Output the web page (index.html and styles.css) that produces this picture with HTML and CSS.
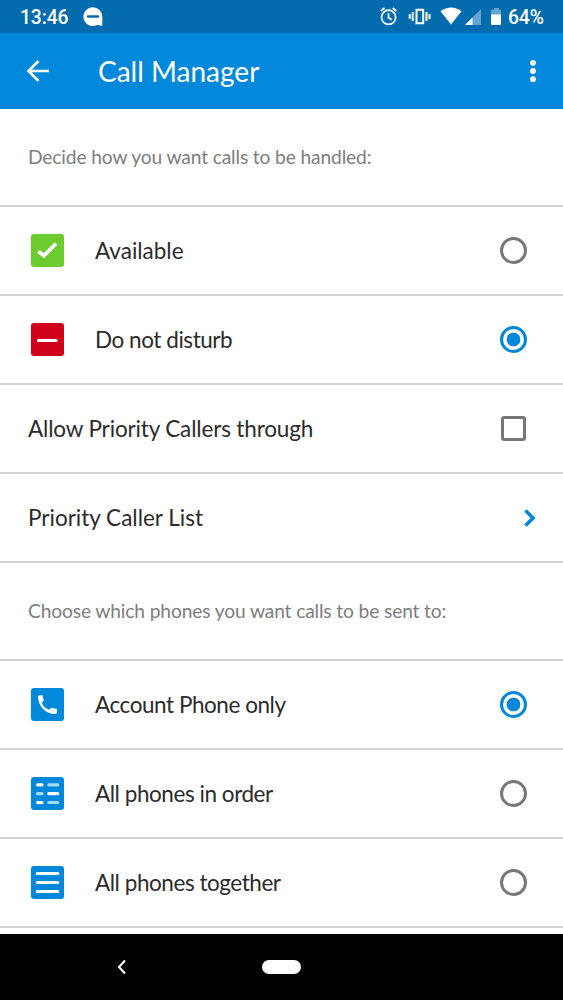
FILE: index.html
```
<!DOCTYPE html>
<html lang="en">
<head>
<meta charset="utf-8">
<title>Call Manager</title>
<link rel="stylesheet" href="styles.css">
</head>
<body>
<div class="screen">
  <div class="status">
    <span class="clock">13:46</span>
    <svg class="bubble" width="20" height="20" viewBox="0 0 20 20"><path d="M10 .3a9.4 9.4 0 1 0 4 17.8l5.3.7V9.500A9.400 9.400 0 0 0 10 .3z" fill="#fff"/><path d="M5 9.500h10" stroke="#026cae" stroke-width="2.400" stroke-linecap="round"/></svg>
    <svg class="indicators" width="126" height="20" viewBox="0 0 126 20">
      <g fill="none" stroke="#fff" stroke-width="1.700">
        <circle cx="9.600" cy="10.300" r="7.100"/><path d="M1.800 4l3.700-3M17.400 4l-3.700-3M9.500 6v4.800l3.500 2"/>
        <path d="M37.500 2.700h6.700v13.600h-6.700zM33.700 5v9M30.700 7v5M47.500 5v9M50.500 7v5" stroke-width="2"/>
      </g>
      <path d="M61.500 4.300Q72-3.200 82.500 4.300L72 17.500z" fill="#fff"/>
      <path d="M102 2v16H86z" fill="#63a5cf"/><path d="M93.500 10.500V18H86z" fill="#fff"/>
      <path d="M112 2.700h3V1h5v1.700h2V8h-10z" fill="#63a5cf"/><path d="M112 7.500h10V18h-10z" fill="#fff"/>
    </svg>
    <span class="percent">64%</span>
  </div>
  <header class="appbar">
    <svg class="back" width="24" height="24" viewBox="0 0 24 24"><path d="M23 12H3M12.500 2L2.500 12l10 10" fill="none" stroke="#fff" stroke-width="2.600"/></svg>
    <h1 class="title">Call Manager</h1>
    <svg class="more" width="8" height="24" viewBox="0 0 8 24" fill="#fff"><circle cx="4" cy="3.800" r="2.900"/><circle cx="4" cy="12" r="2.900"/><circle cx="4" cy="20.200" r="2.900"/></svg>
  </header>
  <main class="list">
    <p class="section">Decide how you want calls to be handled:</p>
    <div class="row">
      <svg class="icon" viewBox="0 0 33 33"><rect width="33" height="33" rx="3" fill="#6ccc2e"/><path d="M7.200 17.200l5.800 4.500L25 9.500" fill="none" stroke="#fff" stroke-width="3.800"/></svg>
      <span class="label">Available</span><span class="radio"></span>
    </div>
    <div class="row">
      <svg class="icon" viewBox="0 0 33 33"><rect width="33" height="33" rx="3" fill="#d0021b"/><path d="M7.500 17.500h17.500" stroke="#fff" stroke-width="3.200" stroke-linecap="round"/></svg>
      <span class="label tight">Do not disturb</span><span class="radio selected"></span>
    </div>
    <div class="row"><span class="label snug">Allow Priority Callers through</span><span class="checkbox"></span></div>
    <div class="row"><span class="label">Priority Caller List</span>
      <svg class="chevron" width="12" height="18" viewBox="0 0 12 18"><path d="M1.500 1.500L9 9l-7.500 7.500" fill="none" stroke="#0288da" stroke-width="3.600"/></svg>
    </div>
    <p class="section">Choose which phones you want calls to be sent to:</p>
    <div class="row">
      <svg class="icon" viewBox="0 0 33 33"><rect width="33" height="33" rx="3" fill="#0288da"/><path d="M7 7.800L11.400 7l1.400 5.500-2.100 2.400c1.600 3.300 3.800 5.300 7.300 6.900l2.500-2 5.500 1.300-.4 4.900C15.500 27 6.800 18.500 7 7.800z" fill="#fff"/></svg>
      <span class="label tight">Account Phone only</span><span class="radio selected"></span>
    </div>
    <div class="row">
      <svg class="icon" viewBox="0 0 33 33"><rect width="33" height="33" rx="3" fill="#0288da"/><g stroke-width="3.200" stroke-linecap="round"><path d="M6.500 7.800H11M17.800 16.700h9M6.500 25.500H11" stroke="#fff"/><path d="M17.800 7.800h9M6.500 16.700H11M17.800 25.500h9" stroke="#a5d9f7"/></g></svg>
      <span class="label tight">All phones in order</span><span class="radio"></span>
    </div>
    <div class="row">
      <svg class="icon" viewBox="0 0 33 33"><rect width="33" height="33" rx="3" fill="#0288da"/><path d="M6.300 7.500h20.500M6.300 16.500h20.500M6.300 25.500h20.500" stroke="#fff" stroke-width="3.200" stroke-linecap="round"/></svg>
      <span class="label tight">All phones together</span><span class="radio"></span>
    </div>
  </main>
  <nav class="navbar">
    <svg class="nav-back" width="10" height="16" viewBox="0 0 10 16"><path d="M8 1.500L2 8l6 6.500" fill="none" stroke="#fff" stroke-width="2"/></svg>
    <span class="home"></span>
  </nav>
</div>
</body>
</html>
```
FILE: styles.css
```
* { box-sizing: border-box; }
body { margin: 0; background: #fff; }
.screen {
  display: flex;
  flex-direction: column;
  width: 563px;
  height: 1000px;
  overflow: hidden;
  font-family: Lato, sans-serif;
  color: #2b2b2b;
}
svg { display: block; flex: none; }

.status {
  display: flex;
  align-items: center;
  flex: none;
  height: 33px;
  padding: 0 19px 0 20px;
  background: #026cae;
  color: #fff;
  font: 500 19.300px/33px Roboto, sans-serif;
  white-space: nowrap;
}
.clock { width: 63px; padding-top: 1px; letter-spacing: -.1px; }
.indicators { margin-left: auto; }
.percent { width: 36px; margin-left: 3px; padding-top: 1px; letter-spacing: -.1px; }

.appbar {
  display: flex;
  align-items: center;
  flex: none;
  height: 76px;
  padding: 0 26px;
  background: #0288da;
  color: #fff;
}
.title { margin: 0 auto 0 48px; font-size: 28px; font-weight: 400; line-height: 76px; }

.list { flex: none; height: 825px; }
.section {
  height: 98px;
  margin: 0;
  padding-left: 28px;
  border-bottom: 2px solid #d3d3d3;
  color: #7d7d7d;
  font-size: 19.200px;
  letter-spacing: -.13px;
  line-height: 96px;
}
.row {
  display: flex;
  align-items: center;
  height: 89px;
  padding: 0 36px 0 28px;
  border-bottom: 2px solid #d3d3d3;
}
.icon { width: 33px; height: 33px; margin: 0 31px 0 3px; }
.label { flex: 1; font-size: 22.500px; line-height: 30px; white-space: nowrap; }
.snug { letter-spacing: -.15px; }
.tight { letter-spacing: -.45px; }
.radio {
  width: 27px;
  height: 27px;
  border: 3px solid #777;
  border-radius: 50%;
}
.selected {
  border: 3px solid #0288da;
  background: radial-gradient(circle, #0288da 6.500px, transparent 7.200px);
}
.checkbox { width: 25px; height: 25px; margin-right: 1px; border: 3px solid #777; border-radius: 3px; }
.chevron { margin-right: -9px; }

.navbar {
  display: flex;
  align-items: center;
  flex: 1;
  padding-left: 117px;
  background: #000;
}
.home { width: 39px; height: 14px; margin-left: 135px; border-radius: 7px; background: #fff; }
```
